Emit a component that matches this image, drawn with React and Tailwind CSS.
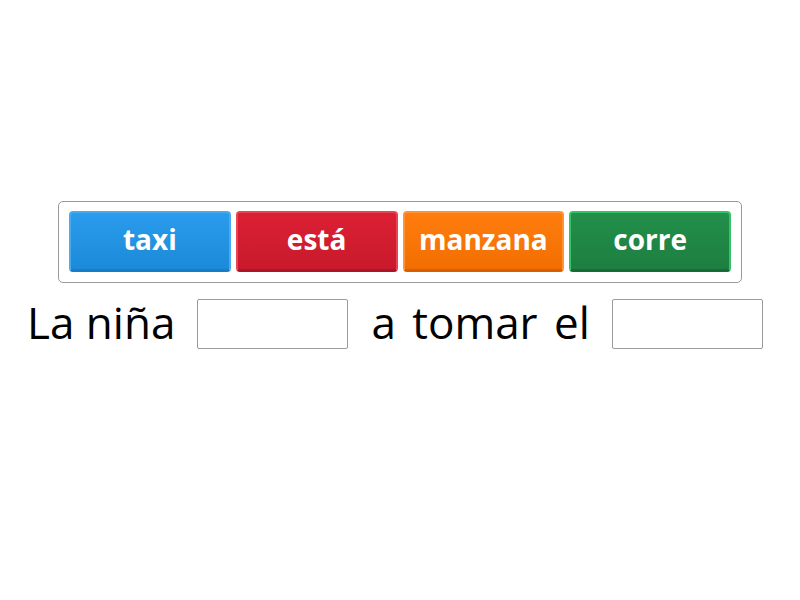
import React from 'react';

const tiles = [
    { word: "taxi", cls: "border-[#4aaaf0] bg-gradient-to-b from-[#2a9cec] to-[#1b8ad8] border-b-[#1a7cc4]" },
    { word: "está", cls: "border-[#e84452] bg-gradient-to-b from-[#dc2034] to-[#c81a2c] border-b-[#a8172a]" },
    { word: "manzana", cls: "border-[#ff9436] bg-gradient-to-b from-[#ff7d0e] to-[#f26e02] border-b-[#d85f00]" },
    { word: "corre", cls: "border-[#34c466] bg-gradient-to-b from-[#228f4a] to-[#1d7f41] border-b-[#186a36]" },
];

const Blank = () => (
    <div className="w-[151px] h-[50px] border border-[#9a9a9a] rounded-[2px] bg-white shrink-0" />
);

const App = () => {
    return (
        <div className="w-[800px] h-[600px] bg-white font-['Open_Sans',sans-serif] pt-[201px]">
            <div className="ml-[58px] w-[684px] h-[82px] border border-[#9a9a9a] rounded-[5px] px-[10px] pt-[9px] flex gap-[5px]">
                {tiles.map((t, i) => (
                    <div
                        key={i}
                        className={`w-[162px] h-[61px] rounded-[4px] border-2 border-b-[3px] flex items-center justify-center pb-[5px] text-white text-[28px] font-bold ${t.cls}`}
                    >
                        {t.word}
                    </div>
                ))}
            </div>
            <div className="flex items-center mt-[16px] text-[44px] text-black leading-none">
                <span className="ml-[27px] mr-[22px] mt-[-5px] whitespace-nowrap">La niña</span>
                <Blank />
                <span className="ml-[23px] mr-[22px] mt-[-5px] whitespace-nowrap [word-spacing:5px]">a tomar el</span>
                <Blank />
            </div>
        </div>
    );
};

export default App;
